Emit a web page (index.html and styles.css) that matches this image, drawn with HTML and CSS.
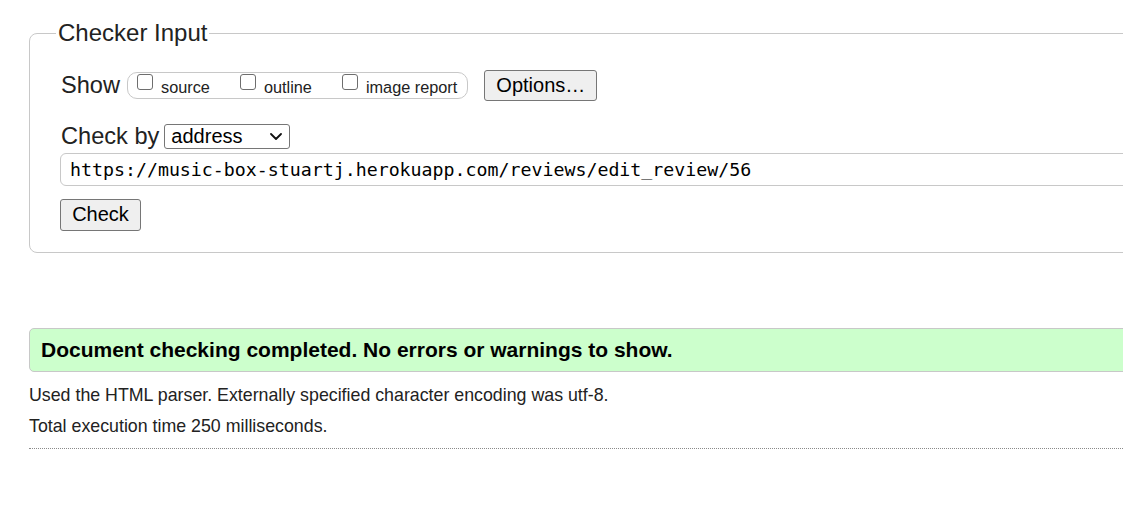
FILE: index.html
```html
<!DOCTYPE html>
<html lang="en">
<head>
<meta charset="utf-8">
<title>Nu Html Checker</title>
<link rel="stylesheet" href="styles.css">
</head>
<body>
<div class="page">
  <form class="checker">
    <fieldset class="input-set">
      <legend class="legend">Checker Input</legend>
      <div class="row row-show">
        <span class="row-label">Show</span>
        <span class="pill">
          <label class="opt"><input type="checkbox" class="cb"><span class="opt-text">source</span></label>
          <label class="opt"><input type="checkbox" class="cb"><span class="opt-text">outline</span></label>
          <label class="opt"><input type="checkbox" class="cb"><span class="opt-text">image report</span></label>
        </span>
        <button type="button" class="btn btn-options">Options…</button>
      </div>
      <div class="row row-by">
        <span class="row-label">Check by</span>
        <span class="select-wrap">
          <select class="select"><option>address</option></select>
          <svg class="chev" width="12" height="7" viewBox="0 0 12 7" aria-hidden="true"><path d="M1 1 L6 6 L11 1" fill="none" stroke="#111" stroke-width="1.8" stroke-linecap="round" stroke-linejoin="round"/></svg>
        </span>
      </div>
      <input class="url" type="text" value="https://music-box-stuartj.herokuapp.com/reviews/edit_review/56">
      <button type="button" class="btn btn-check">Check</button>
    </fieldset>
  </form>
  <div class="result">Document checking completed. No errors or warnings to show.</div>
  <p class="note note-first">Used the HTML parser. Externally specified character encoding was utf-8.</p>
  <p class="note">Total execution time 250 milliseconds.</p>
  <hr class="rule">
</div>
</body>
</html>
```
FILE: styles.css
```css
html, body {
  margin: 0;
  padding: 0;
  overflow: hidden;
  background: #fff;
}
body {
  font-family: "Liberation Sans", Arial, sans-serif;
  color: #222;
  width: 1123px;
  height: 513px;
}
.page {
  padding: 19px 0 0 29px;
  width: 1300px;
}
.checker {
  margin: 0;
}
.input-set {
  margin: 0;
  width: 1200px;
  box-sizing: border-box;
  border: 1px solid #c8c8c8;
  border-radius: 8px;
  padding: 0 0 21px 31px;
}
.legend {
  font-size: 24px;
  padding: 0 2px;
  margin-left: -5px;
  color: #222;
}
.row {
  display: flex;
  align-items: center;
}
.row-show {
  margin-top: 23px;
  height: 31px;
}
.row-label {
  font-size: 23.6px;
  line-height: 27.6px;
}
.pill {
  display: flex;
  align-items: center;
  height: 27px;
  box-sizing: border-box;
  border: 1px solid #c8c8c8;
  border-radius: 10px;
  margin-left: 7px;
  padding: 0 10px 0 9px;
}
.opt {
  display: flex;
  align-items: center;
  font-size: 16.3px;
  margin-right: 30px;
}
.opt:last-child {
  margin-right: 0;
}
.opt-text {
  margin-top: 4px;
}
.cb {
  appearance: none;
  -webkit-appearance: none;
  width: 16px;
  height: 16px;
  box-sizing: border-box;
  border: 1.5px solid #6e6e6e;
  border-radius: 3px;
  background: #fff;
  margin: 0 8px 7px 0;
}
.btn {
  font-family: "Liberation Sans", Arial, sans-serif;
  font-size: 20px;
  color: #000;
  background: #efefef;
  border: 1px solid #767676;
  border-radius: 3px;
  box-sizing: border-box;
  padding: 0;
}
.btn-options {
  margin-left: 16px;
  width: 113px;
  height: 31px;
}
.row-by {
  margin-top: 22px;
  height: 27.6px;
}
.select-wrap {
  position: relative;
  display: inline-flex;
  margin-left: 5px;
}
.select {
  appearance: none;
  -webkit-appearance: none;
  width: 126px;
  height: 25px;
  box-sizing: border-box;
  font-family: "Liberation Sans", Arial, sans-serif;
  font-size: 20px;
  line-height: 23px;
  color: #000;
  border: 1px solid #767676;
  border-radius: 3px;
  background: #fff;
  padding: 0 0 0 6px;
}
.chev {
  position: absolute;
  left: 106px;
  top: 9px;
  pointer-events: none;
}
.url {
  display: block;
  margin: 2px 0 0 -1px;
  width: 1150px;
  height: 33px;
  box-sizing: border-box;
  border: 1px solid #c8c8c8;
  border-radius: 6px;
  padding: 0 0 0 9px;
  font-family: "DejaVu Sans Mono", "Liberation Mono", monospace;
  font-size: 18.25px;
  color: #000;
  outline: none;
}
.btn-check {
  display: block;
  margin: 13px 0 0 -1px;
  width: 81px;
  height: 32px;
}
.result {
  margin-top: 75px;
  height: 44px;
  box-sizing: border-box;
  border: 1px solid #c8c8c8;
  border-radius: 5px;
  background: #ccffcc;
  color: #000;
  font-weight: bold;
  font-size: 21px;
  line-height: 42px;
  padding-left: 11px;
}
.note {
  margin: 11px 0 0 0;
  font-size: 17.8px;
  line-height: 20px;
  color: #222;
}
.note-first {
  margin-top: 13px;
}
.rule {
  margin: 12px 0 0 0;
  border: 0;
  border-top: 1px dotted #8a8a8a;
  height: 0;
}
```
